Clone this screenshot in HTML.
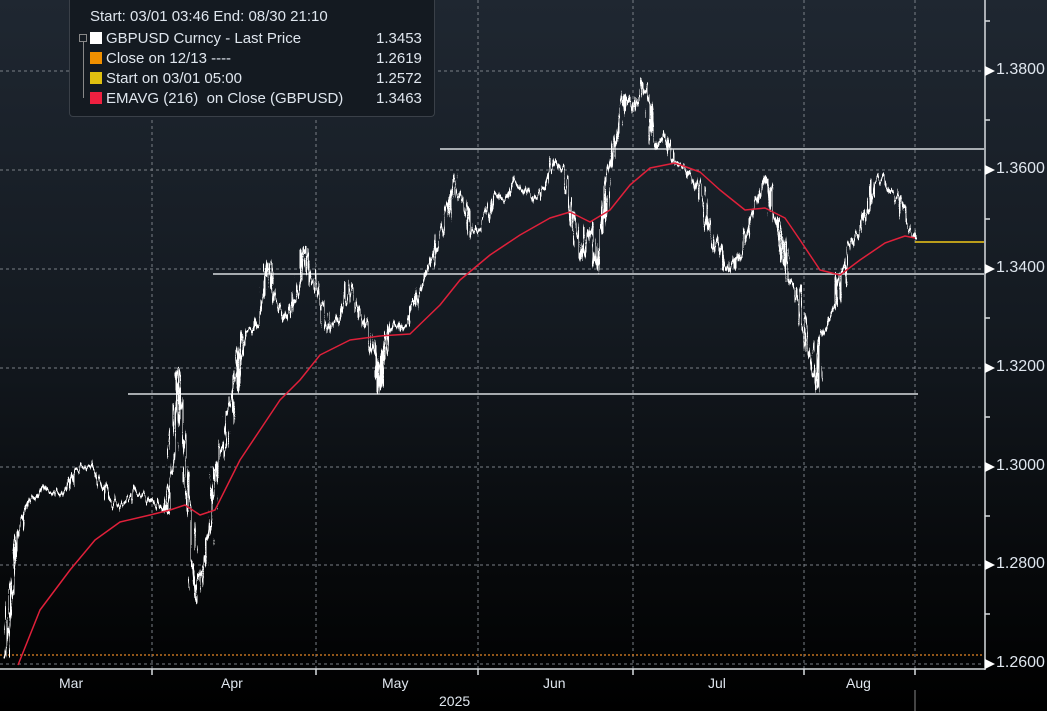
<!DOCTYPE html>
<html><head><meta charset="utf-8"><style>
html,body{margin:0;padding:0;}
body{width:1047px;height:711px;overflow:hidden;background:linear-gradient(#1f2731 0%,#141a21 45%,#07090b 80%,#000 100%);font-family:"Liberation Sans",sans-serif;position:relative;}
svg{position:absolute;left:0;top:0;}
.lbl{position:absolute;color:#dfe6ee;font-size:16px;}
.legend{position:absolute;left:69px;top:0;width:364px;height:116px;background:#141a21;border:1px solid #3a4048;border-top:none;border-radius:0 0 4px 4px;color:#dfe6ee;font-size:15px;}
.legend div{position:absolute;white-space:nowrap;}
.sw{display:inline-block;width:12px;height:12px;vertical-align:-1px;margin-right:4px;}
</style></head><body>
<svg width="1047" height="711" viewBox="0 0 1047 711">
<defs>
<filter id="j" filterUnits="userSpaceOnUse" x="0" y="0" width="1047" height="711">
<feTurbulence type="fractalNoise" baseFrequency="0.35 0.03" numOctaves="2" seed="3" result="n"/>
<feDisplacementMap in="SourceGraphic" in2="n" scale="18" xChannelSelector="R" yChannelSelector="G"/>
</filter>
</defs>
<g stroke="#7a7f86" stroke-width="1" stroke-dasharray="3,3" fill="none">
<line x1="0" y1="71" x2="984" y2="71"/><line x1="0" y1="170" x2="984" y2="170"/><line x1="0" y1="269" x2="984" y2="269"/><line x1="0" y1="368" x2="984" y2="368"/><line x1="0" y1="467" x2="984" y2="467"/><line x1="0" y1="565" x2="984" y2="565"/><line x1="0" y1="664" x2="984" y2="664"/>
<line x1="152" y1="0" x2="152" y2="669"/><line x1="316" y1="0" x2="316" y2="669"/><line x1="478" y1="0" x2="478" y2="669"/><line x1="633" y1="0" x2="633" y2="669"/><line x1="804" y1="0" x2="804" y2="669"/><line x1="915" y1="0" x2="915" y2="669"/>
</g>
<line x1="0" y1="655" x2="984" y2="655" stroke="#c07020" stroke-width="1.5" stroke-dasharray="2,2"/>
<g stroke="#d8dcdf" stroke-width="1.5">
<line x1="440" y1="149" x2="984" y2="149"/><line x1="213" y1="274" x2="984" y2="274"/><line x1="128" y1="394" x2="918" y2="394"/>
</g>
<line x1="915" y1="242" x2="984" y2="242" stroke="#f0c818" stroke-width="1.5"/>
<polyline fill="none" stroke="#fff" stroke-width="3" stroke-linejoin="round" filter="url(#j)" points="5,660 10,600 20,520 30,500 45,490 60,495 75,470 90,465 100,480 110,500 120,510 135,490 150,500 165,510 172,470 178,370 183,430 190,520 196,600 203,570 210,530 215,470 225,440 235,380 245,330 255,330 262,300 268,262 275,300 285,320 295,300 305,250 312,280 320,300 328,330 338,320 350,285 358,310 368,330 375,350 380,390 385,340 392,320 400,330 410,320 418,290 428,270 435,250 442,230 448,210 455,175 462,200 470,235 478,230 488,210 495,195 505,200 515,180 525,190 535,200 545,185 555,160 565,175 575,230 582,260 590,225 598,270 605,200 612,150 618,130 625,95 632,110 640,95 646,80 652,135 658,145 665,135 672,160 680,165 690,175 700,190 710,230 718,250 725,270 735,265 745,240 752,215 760,190 767,180 772,210 780,230 788,280 795,290 800,305 806,340 812,370 816,390 820,340 828,320 835,310 842,275 850,245 860,230 868,210 875,180 882,175 890,190 900,200 908,225 915,240"/>
<polyline fill="none" stroke="#e0203a" stroke-width="1.5" stroke-linejoin="round" points="18,665 40,610 70,570 95,540 120,522 150,515 170,510 185,505 200,515 215,510 240,460 260,430 280,400 300,380 320,355 350,340 380,336 410,334 440,305 460,280 490,255 520,235 550,218 570,212 590,222 610,210 630,185 650,168 675,163 700,172 720,190 745,210 765,208 785,218 800,240 820,270 840,275 860,260 885,243 905,236 915,238"/>
<g stroke="#d8dcdf" stroke-width="1.5">
<line x1="985" y1="0" x2="985" y2="670"/><line x1="0" y1="669" x2="985" y2="669"/>
<line x1="152" y1="669" x2="152" y2="675"/><line x1="316" y1="669" x2="316" y2="675"/><line x1="478" y1="669" x2="478" y2="675"/><line x1="633" y1="669" x2="633" y2="675"/><line x1="804" y1="669" x2="804" y2="675"/><line x1="915" y1="669" x2="915" y2="675"/>
<line x1="985" y1="21" x2="990" y2="21"/><line x1="985" y1="120" x2="990" y2="120"/><line x1="985" y1="219" x2="990" y2="219"/><line x1="985" y1="318" x2="990" y2="318"/><line x1="985" y1="417" x2="990" y2="417"/><line x1="985" y1="516" x2="990" y2="516"/><line x1="985" y1="614" x2="990" y2="614"/>
</g>
<line x1="915" y1="690" x2="915" y2="711" stroke="#888" stroke-width="1"/>
<g fill="#fff">
<polygon points="985,66 995,71 985,76"/><polygon points="985,165 995,170 985,175"/><polygon points="985,264 995,269 985,274"/><polygon points="985,363 995,368 985,373"/><polygon points="985,462 995,467 985,472"/><polygon points="985,560 995,565 985,570"/><polygon points="985,659 995,664 985,669"/>
</g>
</svg>
<div class="lbl" style="left:996px;top:61px">1.3800</div>
<div class="lbl" style="left:996px;top:160px">1.3600</div>
<div class="lbl" style="left:996px;top:259px">1.3400</div>
<div class="lbl" style="left:996px;top:358px">1.3200</div>
<div class="lbl" style="left:996px;top:457px">1.3000</div>
<div class="lbl" style="left:996px;top:555px">1.2800</div>
<div class="lbl" style="left:996px;top:654px">1.2600</div>
<div class="lbl" style="left:59px;top:675px;font-size:14px">Mar</div>
<div class="lbl" style="left:221px;top:675px;font-size:14px">Apr</div>
<div class="lbl" style="left:382px;top:675px;font-size:14px">May</div>
<div class="lbl" style="left:543px;top:675px;font-size:14px">Jun</div>
<div class="lbl" style="left:708px;top:675px;font-size:14px">Jul</div>
<div class="lbl" style="left:846px;top:675px;font-size:14px">Aug</div>
<div class="lbl" style="left:439px;top:693px;font-size:14px">2025</div>
<div class="legend">
<div style="left:20px;top:8px">Start: 03/01 03:46 End: 08/30 21:10</div>
<div style="left:9px;top:34px;width:6px;height:6px;border:1px solid #888;"></div>
<div style="left:13px;top:42px;width:1px;height:56px;background:#888;"></div>
<div style="left:20px;top:30px"><span class="sw" style="background:#fff"></span>GBPUSD Curncy - Last Price</div>
<div style="left:20px;top:50px"><span class="sw" style="background:#f09000"></span>Close on 12/13 ----</div>
<div style="left:20px;top:70px"><span class="sw" style="background:#e0c010"></span>Start on 03/01 05:00</div>
<div style="left:20px;top:90px"><span class="sw" style="background:#f02040"></span>EMAVG (216)&nbsp; on Close (GBPUSD)</div>
<div style="left:306px;top:30px">1.3453</div>
<div style="left:306px;top:50px">1.2619</div>
<div style="left:306px;top:70px">1.2572</div>
<div style="left:306px;top:90px">1.3463</div>
</div>
</body></html>
